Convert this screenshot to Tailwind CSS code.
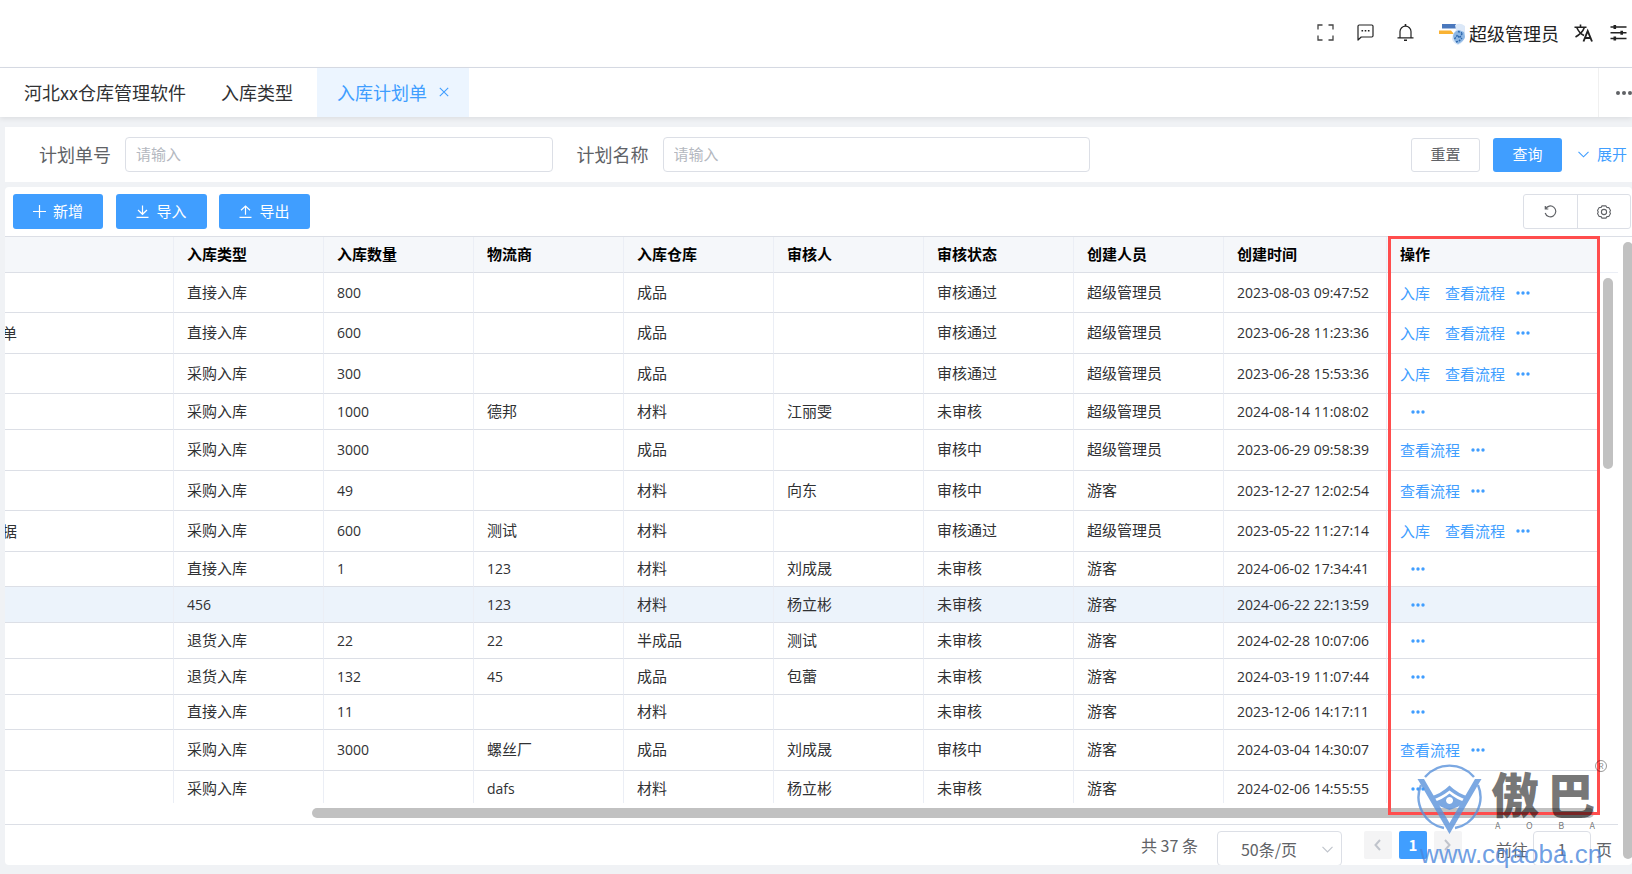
<!DOCTYPE html>
<html lang="zh-CN">

<head>
  <meta charset="UTF-8" />
  <meta name="viewport" content="width=device-width, initial-scale=1.0" />
  <title>入库计划单</title>
  <script src="https://cdn.jsdelivr.net/npm/@tailwindcss/browser@4"></script>
</head>

<body class="h-screen flex flex-col overflow-hidden bg-[#f0f2f5] font-['Noto_Sans_CJK_SC',sans-serif] text-[15px] text-[#303133]">

  <!-- top bar -->
  <header class="h-[68px] shrink-0 flex items-center justify-end bg-white border-b border-[#d8dce5] pr-[5px] pb-0.5">
    <button class="mr-[23px]" aria-label="全屏">
      <svg class="w-[17px] h-[17px]" viewBox="0 0 17 17" fill="none" stroke="#444" stroke-width="1.3">
        <path d="M1 5.5V1h4.5M11.5 1H16v4.5M16 11.5V16h-4.5M5.5 16H1v-4.5" />
      </svg>
    </button>
    <button class="mr-[23px]" aria-label="消息">
      <svg class="w-[17px] h-[17px]" viewBox="0 0 17 17" fill="none" stroke="#222" stroke-width="1.2" stroke-linejoin="round">
        <path d="M1 16V2.2Q1 1 2.2 1h12.6Q16 1 16 2.2v9.6q0 1.2-1.2 1.2H4.2z" />
        <path d="M4.5 6.7h1.6M7.7 6.7h1.6M10.9 6.7h1.6" stroke-width="1.5" />
      </svg>
    </button>
    <button class="mr-6" aria-label="通知">
      <svg class="w-[17px] h-[17px]" viewBox="0 0 17 17" fill="none" stroke="#222" stroke-width="1.2">
        <path d="M.5 13.8h16M3 13.5V7.6a5.5 5.5 0 0 1 11 0v5.9" />
        <path d="M8.5 0v2M7 16.2h3" stroke-width="1.6" />
      </svg>
    </button>
    <button class="mr-[15px] flex items-center gap-[3px] text-lg leading-6 text-[#222]">
      <svg class="w-7 h-6 mt-1" viewBox="0 0 28 24">
        <path d="M4 1h14v4.5H4z" fill="#4a78bd" />
        <path d="M1 7.5h12l3 3.500H1z" fill="#f9b233" />
        <path d="M17 2q5-3 10 1v11q-1 5-7 8-5-2-6-6l1-5 3-4z" fill="#dbe8f8" />
        <path d="M15 13q1-5 6-6l5 2 1 5q-1 4-7 7-4-2-5-8z" fill="#8db7e4" />
        <path d="M16.5 16l3-4 2 3 3-5M18 19l3-1 3-3M20 8.500l4 1.500" stroke="#2d67ad" stroke-width="1.4" fill="none" stroke-dasharray="2 1" />
      </svg>
      超级管理员
    </button>
    <button class="mr-[17px]" aria-label="语言">
      <svg class="w-[19px] h-[18px]" viewBox="0 0 19 18" fill="none" stroke="#222" stroke-width="1.6">
        <path d="M.5 3.2h12M6.5.5v3M2.8 3.5Q5 9 10 11.5M10.3 3.5Q8.5 9 1.5 13" />
        <path d="M9.5 17.5l4.2-10.5 4.3 10.5M11 14h5.5" stroke-width="1.9" />
      </svg>
    </button>
    <button aria-label="设置">
      <svg class="w-[17px] h-[17px]" viewBox="0 0 17 17" fill="none" stroke="#222" stroke-width="1.4">
        <path d="M.5 3h16M.5 8.7h16M.5 14.5h16" />
        <path d="M4.8 1v4M11.7 6.7v4M4.8 12.5v4" stroke-width="2.6" />
      </svg>
    </button>
  </header>

  <!-- page tabs -->
  <nav class="relative z-10 h-[49px] shrink-0 flex items-stretch bg-white text-lg leading-6 shadow-[0_2px_5px_rgba(0,0,0,0.08)]">
    <a href="#" class="flex items-center pl-6 pr-[15px] pb-0.5">河北xx仓库管理软件</a>
    <a href="#" class="flex items-center pl-5 pr-6 pb-0.5">入库类型</a>
    <a href="#" class="flex items-center gap-3 px-5 pb-0.5 bg-[#ecf5ff] text-[#409eff]">入库计划单
      <svg class="w-[10px] h-[10px]" viewBox="0 0 10 10" stroke="#409eff" stroke-width="1.1"><path d="M.8.8l8.4 8.4M9.2.8L.8 9.2" /></svg>
    </a>
    <button class="ml-auto w-[34px] flex items-center justify-end border-l border-[#f0f0f0]" aria-label="更多">
      <svg class="w-4 h-4" viewBox="0 0 16 16" fill="#606266"><circle cx="2" cy="8" r="2" /><circle cx="8" cy="8" r="2" /><circle cx="14" cy="8" r="2" /></svg>
    </button>
  </nav>

  <!-- search form -->
  <form class="mt-2.5 ml-[5px] h-[55px] shrink-0 flex items-center bg-white pl-[34px] pr-[5px]">
    <label for="planNo" class="mr-3.5 pb-0.5 text-lg leading-6 text-[#606266]">计划单号</label>
    <input id="planNo" type="text" placeholder="请输入"
      class="flex-1 min-w-0 h-[35px] px-2.5 pb-0.5 border border-[#dcdfe6] rounded placeholder:text-[#b4b8c0]">
    <label for="planName" class="ml-6 mr-3.5 pb-0.5 text-lg leading-6 text-[#606266]">计划名称</label>
    <input id="planName" type="text" placeholder="请输入"
      class="flex-1 min-w-0 h-[35px] px-2.5 pb-0.5 border border-[#dcdfe6] rounded placeholder:text-[#b4b8c0]">
    <div class="w-[537px] flex items-center justify-end">
      <button type="button" class="w-[69px] h-[34px] mr-[13px] border border-[#dcdfe6] rounded-[3px] text-[#606266]">重置</button>
      <button type="button" class="w-[69px] h-[34px] mr-4 rounded-[3px] bg-[#409eff] text-white">查询</button>
      <button type="button" class="flex items-center gap-2 text-[#409eff]">
        <svg class="w-[11px] h-[7px]" viewBox="0 0 11 7" fill="none" stroke="#409eff" stroke-width="1.1"><path d="M.5.8l5 5 5-5" /></svg>
        展开
      </button>
    </div>
  </form>

  <main class="relative mt-[5px] ml-[5px] mb-[9px] flex-1 min-h-0 flex flex-col bg-white rounded overflow-hidden">
    <!-- toolbar -->
    <div class="h-[50px] shrink-0 flex items-center border-b border-[#dcdfe6] pl-2 pr-px">
      <button class="w-[90px] h-[35px] mr-[13px] flex items-center justify-center gap-[7px] rounded-[3px] bg-[#409eff] text-white">
        <svg class="w-[13px] h-[13px]" viewBox="0 0 13 13" stroke="#fff" stroke-width="1.2"><path d="M6.5 0v13M0 6.5h13" /></svg>新增
      </button>
      <button class="w-[91px] h-[35px] mr-3 flex items-center justify-center gap-[7px] rounded-[3px] bg-[#409eff] text-white">
        <svg class="w-[13px] h-[13px]" viewBox="0 0 13 13" fill="none" stroke="#fff" stroke-width="1.2"><path d="M6.5.5v8.5M2 5l4.5 4.3L11 5M.5 12.3h12" /></svg>导入
      </button>
      <button class="w-[91px] h-[35px] flex items-center justify-center gap-[7px] rounded-[3px] bg-[#409eff] text-white">
        <svg class="w-[13px] h-[13px]" viewBox="0 0 13 13" fill="none" stroke="#fff" stroke-width="1.2"><path d="M6.5 9.8V1.3M2 5.3L6.5 1 11 5.3M.5 12.3h12" /></svg>导出
      </button>
      <div class="ml-auto w-[108px] h-[35px] flex border border-[#dcdfe6] rounded-[3px]">
        <button class="flex-1 flex items-center justify-center border-r border-[#dcdfe6]" aria-label="刷新">
          <svg class="w-[13px] h-[13px]" viewBox="0 0 13 13" fill="none" stroke="#606266" stroke-width="1.2"><path d="M1.3 1v3h3M1.5 4A5.4 5.4 0 1 1 1.2 8" /></svg>
        </button>
        <button class="flex-1 flex items-center justify-center" aria-label="列设置">
          <svg class="w-[14px] h-[14px]" viewBox="0 0 14 14" fill="none" stroke="#606266" stroke-width="1.1" stroke-linejoin="round">
            <path d="M5 .9h4l.9 1.6 1.9.1 1.7 3L12.7 7l.8 1.5-1.7 3-1.9.1L9 13.1H5l-.9-1.5-1.9-.1-1.7-3L1.3 7 .5 5.5l1.7-3 1.9-.1z" />
            <circle cx="7" cy="7" r="2.6" />
          </svg>
        </button>
      </div>
    </div>

    <!-- data table -->
    <div class="relative flex-1 min-h-0 flex flex-col pr-[14px]">
      <div class="flex-1 min-h-0 flex overflow-hidden">
        <div class="flex-1 min-w-0">
          <table class="w-full table-fixed border-separate border-spacing-0 text-left">
            <colgroup>
              <col>
              <col class="w-[150px]"><col class="w-[150px]"><col class="w-[150px]"><col class="w-[150px]">
              <col class="w-[150px]"><col class="w-[150px]"><col class="w-[150px]">
              <col class="w-[163px]">
              <col class="w-[213px]">
            </colgroup>
            <thead id="head" class="bg-[#f5f7fa] text-black"></thead>
            <tbody id="rows"></tbody>
          </table>
        </div>
        <div class="w-[18px]">
          <div class="h-9 border-b border-[#ebeef5]"></div>
          <div class="mt-[5px] ml-[3px] w-2.5 h-[191px] rounded-full bg-[#c1c1c1]"></div>
        </div>
      </div>
      <div class="h-[21px] shrink-0 pt-[5px] pl-[307px] pr-6">
        <div class="h-2.5 rounded-full bg-[#c1c1c1]"></div>
      </div>
      <!-- highlighted operation column -->
      <div class="absolute -top-px bottom-[9px] right-8 w-[212px] border-3 border-[#ff4d4d] pointer-events-none"></div>
    </div>

    <!-- pagination -->
    <div class="h-[41px] shrink-0 mr-[14px] flex items-start justify-end border-t border-[#dcdfe6] pt-1.5 pr-1.5 text-base text-[#606266]">
      <span class="h-7 mr-[19px] leading-7">共 37 条</span>
      <div class="relative mr-[22px]">
        <select aria-label="每页条数" class="block w-[125px] h-[35px] pl-[23px] border border-[#dcdfe6] rounded appearance-none">
          <option>50条/页</option>
        </select>
        <svg class="absolute right-[9px] top-[15px] w-[11px] h-[7px]" viewBox="0 0 11 7" fill="none" stroke="#c0c4cc" stroke-width="1.2"><path d="M.5.8l5 5 5-5" /></svg>
      </div>
      <button class="w-7 h-7 mr-[7px] flex items-center justify-center rounded-xs bg-[#f4f4f5]" aria-label="上一页">
        <svg class="w-[7px] h-3" viewBox="0 0 7 12" fill="none" stroke="#c0c4cc" stroke-width="2"><path d="M6 1L1.5 6 6 11" /></svg>
      </button>
      <button class="w-7 h-7 mr-[7px] rounded-xs bg-[#409eff] text-[15px] font-bold text-white">1</button>
      <button class="w-7 h-7 mr-[34px] flex items-center justify-center rounded-xs bg-[#f4f4f5]" aria-label="下一页">
        <svg class="w-[7px] h-3" viewBox="0 0 7 12" fill="none" stroke="#c0c4cc" stroke-width="2"><path d="M1 1l4.5 5L1 11" /></svg>
      </button>
      <label for="jump" class="mr-[5px] leading-[37px]">前往</label>
      <input id="jump" type="text" value="1" class="w-[58px] h-[35px] mr-[5px] border border-[#dcdfe6] rounded text-center">
      <span class="leading-[37px]">页</span>
    </div>

    <!-- page scrollbar -->
    <div class="absolute -right-px top-[55px] bottom-[6px] w-2.5 rounded-full bg-[#c1c1c1]"></div>
  </main>

  <!-- watermark -->
  <div class="absolute right-[25px] bottom-1 w-[190px] pointer-events-none">
    <div class="flex items-start mb-1">
      <svg class="w-[66px] h-[70px] shrink-0" viewBox="0 0 66 70" fill="none" opacity="0.8">
        <path d="M8 13A32 32 0 0 1 57 13M4 21A31.5 31.5 0 0 0 27 64M61 21A31.5 31.5 0 0 1 38 64" stroke="#5b93dc" stroke-width="2.4" />
        <path d="M.5 15H7l25.500 44L58 15h6.500l-3 5L32.5 70 3.500 20z" fill="#5b93dc" />
        <path d="M12 33q12-3 20.500-11.500Q41 30 53 33l-3 3q-9-3-17.500-9.500Q24 33 15 36z" fill="#5b93dc" />
        <path fill-rule="evenodd" d="M16 38q9-2 16.500-8.500Q40 36 49 38q-7 5-16.500 8Q23 43 16 38zm16.500-5a3.500 3.500 0 1 0 .1 0z" fill="#5b93dc" />
      </svg>
      <div class="pl-2 text-black/55">
        <div class="flex gap-2 text-5xl leading-[56px] font-black"><span>傲</span><span>巴</span></div>
        <div class="flex justify-between pl-1 text-[9px] leading-3"><span>A</span><span>O</span><span>B</span><span>A</span></div>
      </div>
      <span class="absolute right-0 -top-1 w-3 h-3 rounded-full border border-black/40 text-center text-[8px] leading-[10px] text-black/50">R</span>
    </div>
    <div class="pl-[3px] font-['Liberation_Sans',sans-serif] text-[26px] leading-8 text-[#4a86dc]/80">www.cqaoba.cn</div>
  </div>

  <script>
    const columns = ['', '入库类型', '入库数量', '物流商', '入库仓库', '审核人', '审核状态', '创建人员', '创建时间', '操作'];

    // height, plan name, type, count, carrier, warehouse, auditor, status, creator, time, actions
    const data = [
      [40, '', '直接入库', '800', '', '成品', '', '审核通过', '超级管理员', '2023-08-03 09:47:52', ['入库', '查看流程']],
      [41, '单', '直接入库', '600', '', '成品', '', '审核通过', '超级管理员', '2023-06-28 11:23:36', ['入库', '查看流程']],
      [40, '', '采购入库', '300', '', '成品', '', '审核通过', '超级管理员', '2023-06-28 15:53:36', ['入库', '查看流程']],
      [36, '', '采购入库', '1000', '德邦', '材料', '江丽雯', '未审核', '超级管理员', '2024-08-14 11:08:02', []],
      [41, '', '采购入库', '3000', '', '成品', '', '审核中', '超级管理员', '2023-06-29 09:58:39', ['查看流程']],
      [40, '', '采购入库', '49', '', '材料', '向东', '审核中', '游客', '2023-12-27 12:02:54', ['查看流程']],
      [41, '据', '采购入库', '600', '测试', '材料', '', '审核通过', '超级管理员', '2023-05-22 11:27:14', ['入库', '查看流程']],
      [35, '', '直接入库', '1', '123', '材料', '刘成晟', '未审核', '游客', '2024-06-02 17:34:41', []],
      [36, '', '456', '', '123', '材料', '杨立彬', '未审核', '游客', '2024-06-22 22:13:59', []],
      [36, '', '退货入库', '22', '22', '半成品', '测试', '未审核', '游客', '2024-02-28 10:07:06', []],
      [36, '', '退货入库', '132', '45', '成品', '包蕾', '未审核', '游客', '2024-03-19 11:07:44', []],
      [35, '', '直接入库', '11', '', '材料', '', '未审核', '游客', '2023-12-06 14:17:11', []],
      [41, '', '采购入库', '3000', '螺丝厂', '成品', '刘成晟', '审核中', '游客', '2024-03-04 14:30:07', ['查看流程']],
      [36, '', '采购入库', '', 'dafs', '材料', '杨立彬', '未审核', '游客', '2024-02-06 14:55:55', []],
    ];
    const activeRow = 8;

    const dots = '<button class="pl-[11px]" aria-label="更多操作"><svg class="w-[14px] h-[14px]" viewBox="0 0 14 14" fill="#409eff"><circle cx="2" cy="7" r="1.7"/><circle cx="7" cy="7" r="1.7"/><circle cx="12" cy="7" r="1.7"/></svg></button>';

    document.getElementById('head').innerHTML = '<tr>' + columns.map(name =>
      `<th class="h-9 px-[13px] pb-0.5 border-b border-r border-b-[#dcdfe6] border-r-[#ebeef5] font-bold leading-5">${name}</th>`).join('') + '</tr>';

    document.getElementById('rows').innerHTML = data.map((row, i) => {
      const [height, name, ...rest] = row;
      const actions = rest.pop();
      const cells = rest.map(text => {
        const latin = /^[\x20-\x7e]+$/.test(text);
        return `<td class="px-[13px] border-b border-r border-b-[#dcdfe6] border-r-[#ebeef5] whitespace-nowrap leading-5 ${latin ? "font-['Open_Sans',sans-serif] text-sm" : 'pb-0.5'}">${text}</td>`;
      }).join('');
      const links = actions.map((text, n) => `<a href="#" class="${n ? 'ml-[15px]' : ''}">${text}</a>`).join('');
      return `<tr class="${i === activeRow ? 'bg-[#ecf3fb]' : ''}" style="height:${height}px">
        <td class="border-b border-r border-b-[#dcdfe6] border-r-[#ebeef5] leading-5"><div class="w-3 overflow-hidden flex justify-end"><span>${name}</span></div></td>
        ${cells}
        <td class="px-[13px] border-b border-[#dcdfe6]"><div class="flex items-center leading-5 text-[#409eff]">${links}${dots}</div></td>
      </tr>`;
    }).join('');
  </script>

</body>

</html>
